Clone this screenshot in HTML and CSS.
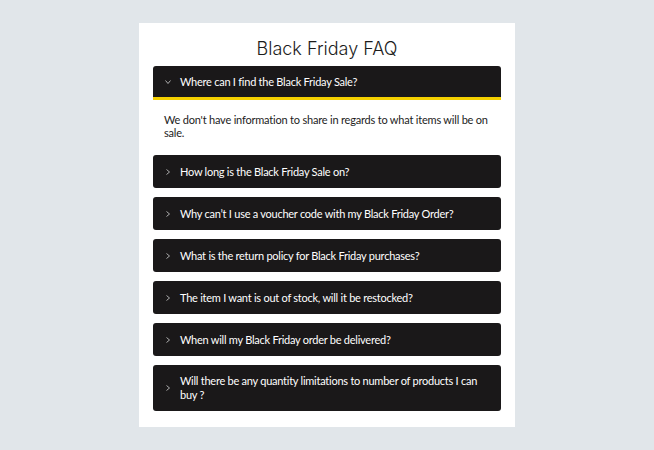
FILE: index.html
```html
<!DOCTYPE html>
<html lang="en">
<head>
    <meta charset="UTF-8">
    <meta name="viewport" content="width=device-width, initial-scale=1.0">
    <title>Black Friday FAQ</title>
    <link rel="stylesheet" href="styles.css">
</head>
<body>
    <div class="card">
        <h1 class="title">Black Friday FAQ</h1>

        <div class="faq-item open">
            <div class="faq-question">
                <svg class="chevron" width="6" height="6" viewBox="0 0 6 6"><polyline points="1.5,0.5 4.5,3 1.5,5.5" fill="none" stroke="#bdbdbd" stroke-width="0.9"/></svg>
                <span>Where can I find the Black Friday Sale?</span>
            </div>
            <div class="faq-answer">We don't have information to share in regards to what items will be on sale.</div>
        </div>

        <div class="faq-item">
            <div class="faq-question"><svg class="chevron" width="6" height="6" viewBox="0 0 6 6"><polyline points="1.5,0.5 4.5,3 1.5,5.5" fill="none" stroke="#bdbdbd" stroke-width="0.9"/></svg><span>How long is the Black Friday Sale on?</span></div>
        </div>
        <div class="faq-item">
            <div class="faq-question"><svg class="chevron" width="6" height="6" viewBox="0 0 6 6"><polyline points="1.5,0.5 4.5,3 1.5,5.5" fill="none" stroke="#bdbdbd" stroke-width="0.9"/></svg><span>Why can’t I use a voucher code with my Black Friday Order?</span></div>
        </div>
        <div class="faq-item">
            <div class="faq-question"><svg class="chevron" width="6" height="6" viewBox="0 0 6 6"><polyline points="1.5,0.5 4.5,3 1.5,5.5" fill="none" stroke="#bdbdbd" stroke-width="0.9"/></svg><span>What is the return policy for Black Friday purchases?</span></div>
        </div>
        <div class="faq-item">
            <div class="faq-question"><svg class="chevron" width="6" height="6" viewBox="0 0 6 6"><polyline points="1.5,0.5 4.5,3 1.5,5.5" fill="none" stroke="#bdbdbd" stroke-width="0.9"/></svg><span>The item I want is out of stock, will it be restocked?</span></div>
        </div>
        <div class="faq-item">
            <div class="faq-question"><svg class="chevron" width="6" height="6" viewBox="0 0 6 6"><polyline points="1.5,0.5 4.5,3 1.5,5.5" fill="none" stroke="#bdbdbd" stroke-width="0.9"/></svg><span>When will my Black Friday order be delivered?</span></div>
        </div>
        <div class="faq-item">
            <div class="faq-question"><svg class="chevron" width="6" height="6" viewBox="0 0 6 6"><polyline points="1.5,0.5 4.5,3 1.5,5.5" fill="none" stroke="#bdbdbd" stroke-width="0.9"/></svg><span>Will there be any quantity limitations to number of products I can buy ?</span></div>
        </div>
    </div>
</body>
</html>
```

FILE: styles.css
```css
body {
    margin: 0;
    background-color: #e1e6ea;
    font-family: Lato, "Liberation Sans", sans-serif;
    display: flex;
    justify-content: center;
    padding-top: 23px;
}

.card {
    width: 376px;
    box-sizing: border-box;
    background-color: #ffffff;
    padding: 14px 14px 16px;
}

.title {
    margin: 0 0 6px;
    text-align: center;
    font-family: Inter, "Open Sans", sans-serif;
    font-weight: 300;
    font-size: 18px;
    line-height: 23px;
    color: #1c1c1c;
}

.faq-item {
    margin-bottom: 9px;
}

.faq-item:last-child {
    margin-bottom: 0;
}

.faq-question {
    display: flex;
    align-items: center;
    gap: 9px;
    min-height: 33px;
    box-sizing: border-box;
    padding: 9px 12px;
    background-color: #1a1819;
    border-radius: 3px;
    color: #ffffff;
    font-size: 11px;
    line-height: 14px;
    letter-spacing: -0.25px;
}

.chevron {
    flex: none;
}

.open .faq-question {
    border-radius: 3px 3px 0 0;
    padding-bottom: 8px;
    border-bottom: 3px solid #f5d000;
    min-height: 34px;
}

.open .chevron {
    transform: rotate(90deg);
}

.faq-answer {
    padding: 13px 6px 7px 11px;
    font-size: 11px;
    line-height: 13px;
    letter-spacing: -0.2px;
    color: #1c1c1c;
}
```
